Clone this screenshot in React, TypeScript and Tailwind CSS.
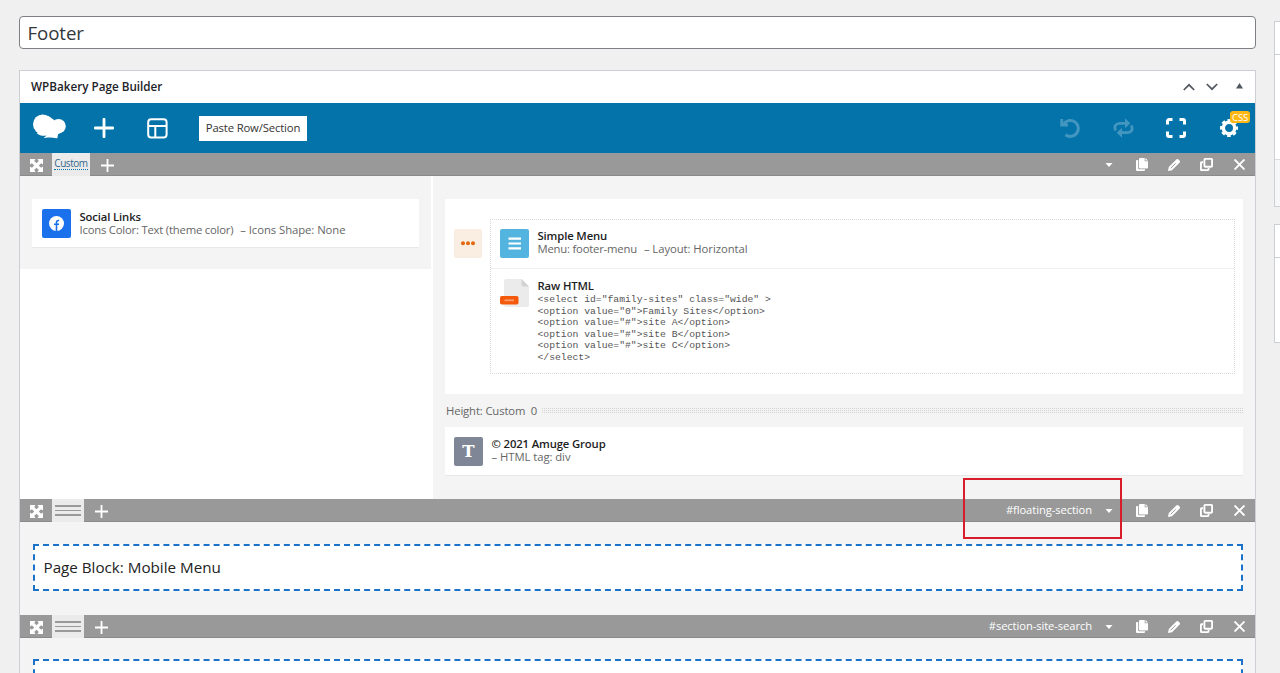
import React from 'react'

type RowBarProps = {
  tab?: string
  anchor?: string
}

const Plus: React.FC<{ size: number; stroke: number }> = ({ size, stroke }) => (
  <svg width={size} height={size} viewBox={`0 0 ${size} ${size}`} stroke="#fff" strokeWidth={stroke}>
    <path d={`M${size / 2} 0V${size}M0 ${size / 2}H${size}`} />
  </svg>
)

const RowBar: React.FC<RowBarProps> = ({ tab, anchor }) => (
  <div className="flex h-[23px] shrink-0 border-b border-[#8a8a8a] bg-[#999999] text-white">
    <div className="flex w-[32px] items-center justify-center pt-[2px]">
      <svg width="13" height="13" viewBox="0 0 13 13" fill="#fff">
        <path d="M0 0h5.6L4.2 1.9 6.5 4.2 8.8 1.9 7.4 0H13v5.6l-1.9-1.4L8.8 6.5l2.3 2.3L13 7.4V13H7.4l1.4-1.9L6.5 8.8l-2.3 2.3L5.6 13H0V7.4l1.9 1.4 2.3-2.3-2.3-2.3L0 5.6z" />
      </svg>
    </div>
    {tab ? (
      <div className="flex h-[23px] w-[38px] justify-center bg-[#ebebeb] pt-[4px]">
        <span className="h-[13px] border-b border-dotted border-[#0073aa] text-[10px] leading-[13px] tracking-[-0.45px] whitespace-nowrap text-[#32698a]">
          {tab}
        </span>
      </div>
    ) : (
      <div className="flex h-[23px] w-[32px] flex-col items-center justify-center gap-[3px] bg-[#ebebeb]">
        <span className="h-[1.5px] w-[26px] bg-[#999]" />
        <span className="h-[1.5px] w-[26px] bg-[#999]" />
        <span className="h-[1.5px] w-[26px] bg-[#999]" />
      </div>
    )}
    <div className="flex w-[34px] items-center justify-center pt-[2px]">
      <Plus size={13} stroke={1.8} />
    </div>
    <div className="ml-auto flex items-center pt-px">
      {anchor && <span className="-mt-px text-[11.2px] leading-none tracking-[-0.08px]">{anchor}</span>}
      <div className="flex w-[33.5px] justify-center pt-px">
        <svg width="8" height="4" viewBox="0 0 8 4" fill="#fff">
          <path d="M.5 0h7L4 4z" />
        </svg>
      </div>
      <div className="flex w-[32.5px] justify-center">
        <svg width="12" height="13" viewBox="0 0 12 13" fill="#fff">
          <path d="M4 0h4.7v3.3H12v6.2a1 1 0 0 1-1 1H4a1 1 0 0 1-1-1V1a1 1 0 0 1 1-1z" />
          <path d="M9.5 0 12 2.5H9.5z" />
          <path d="M2.2 2H1a1 1 0 0 0-1 1v9a1 1 0 0 0 1 1h7a1 1 0 0 0 1-1v-.7H3.2a1 1 0 0 1-1-1z" />
        </svg>
      </div>
      <div className="flex w-[32.5px] justify-center">
        <svg width="12" height="12" viewBox="0 0 12 12">
          <path fill="#fff" d="M0 12 .8 8 8.3.5a1.5 1.5 0 0 1 2.1 0l1.1 1.1a1.5 1.5 0 0 1 0 2.1L4 11.2z" />
          <path d="M2.6 9.3 7.6 4.3" stroke="#999" strokeWidth="1" />
        </svg>
      </div>
      <div className="flex w-[32.5px] justify-center">
        <svg width="13" height="13" viewBox="0 0 13 13" fill="none" stroke="#fff" strokeWidth="1.9">
          <rect x="4.4" y=".9" width="7.7" height="7.9" rx="1" />
          <path d="M3 4.2H1.9a1 1 0 0 0-1 1v5.9a1 1 0 0 0 1 1h5.7a1 1 0 0 0 1-1V10" />
        </svg>
      </div>
      <div className="flex w-[32px] justify-center">
        <svg width="11" height="11" viewBox="0 0 11 11" stroke="#fff" strokeWidth="1.9">
          <path d="M.5.5l10 10M10.5.5.5 10.5" />
        </svg>
      </div>
    </div>
  </div>
)

const Toolbar = () => (
  <div className="flex h-[50px] shrink-0 items-center bg-[#0473aa]">
    <svg className="-mt-[3px] ml-[13px]" width="33" height="25" viewBox="0 0 33 25" fill="#fff">
      <circle cx="9.8" cy="10.3" r="9.8" />
      <circle cx="25.5" cy="12.2" r="7.3" />
      <path d="M15.5 2 20.8 5.8 28 19c-2 .5-2.800.700-3 1.600l-.5 2.900c-.1.700-.5.900-1.200.8-3.800-.8-7-.9-11.600-.3-.8.100-.9-.5-.3-.8l2.400-1.700c-3.300.7-7 .4-9.800-2L9 8z" />
    </svg>
    <div className="ml-[28px]">
      <svg width="20" height="20" viewBox="0 0 20 20" stroke="#fff" strokeWidth="2.8" strokeLinecap="round">
        <path d="M10 1.2v17.6M1.2 10h17.6" />
      </svg>
    </div>
    <svg className="ml-[33px]" width="21" height="21" viewBox="0 0 21 21" fill="none" stroke="#fff" strokeWidth="2">
      <rect x="1.2" y="1.2" width="18.4" height="18.4" rx="3" />
      <path d="M1.2 7.9h18.4M8.3 7.9v11.7" />
    </svg>
    <button className="ml-[31px] h-[25px] w-[108px] bg-white text-[11.3px] leading-none tracking-[-0.15px] whitespace-nowrap text-[#333]">
      Paste Row/Section
    </button>
    <div className="ml-auto flex items-center">
      <svg width="21" height="21" viewBox="0 0 21 21" fill="none" stroke="#4396c0" strokeWidth="3">
        <path d="M4 5.5A8 8 0 1 1 5.5 16.8" />
        <path d="M.3 1v7.4h7.6V5.5L3.2 4.8V1z" fill="#4396c0" stroke="none" />
      </svg>
      <svg className="ml-[32px]" width="21" height="20" viewBox="0 0 21 20" fill="none" stroke="#4396c0" strokeWidth="2.8">
        <path d="M2.7 12.5C.5 8.3 3 5.3 7 5.3h6.3M18.3 7.5c2.2 4.2-.3 7.2-4.3 7.2H7.7" />
        <path d="M12 .3 17.3 5.3 12 10.3zM9 9.7 3.7 14.7 9 19.7z" fill="#4396c0" stroke="none" />
      </svg>
      <svg className="ml-[32px]" width="20" height="20" viewBox="0 0 20 20" fill="none" stroke="#fff" strokeWidth="3">
        <path d="M1.5 6.5V3a1.5 1.5 0 0 1 1.5-1.5h3.5M13.5 1.5H17A1.5 1.5 0 0 1 18.5 3v3.5M18.5 13.5V17a1.5 1.5 0 0 1-1.5 1.5h-3.5M6.500 18.5H3A1.500 1.5 0 0 1 1.5 17v-3.5" />
      </svg>
      <div className="relative mr-[17px] ml-[34px]">
        <svg width="18" height="18" viewBox="0 0 18 18" fill="none" stroke="#fff">
          <circle cx="9" cy="9" r="5.700" strokeWidth="3.4" />
          <circle cx="9" cy="9" r="7.9" strokeWidth="2.2" strokeDasharray="3.6 2.605" strokeDashoffset="1.8" />
        </svg>
        <span className="absolute top-[-8px] left-[10px] h-[12px] w-[20px] rounded-[3px] bg-[#fdb813] text-center text-[9.5px] leading-[13px] tracking-[-0.2px] text-white">
          CSS
        </span>
      </div>
    </div>
  </div>
)

type ElementTextProps = {
  title: string
  first?: string
  second?: string
  children?: React.ReactNode
}

const ElementText: React.FC<ElementTextProps> = ({ title, first, second, children }) => (
  <div className="ml-[8.5px] whitespace-nowrap">
    <h4 className="text-[11.3px] leading-[13px] font-semibold tracking-[-0.13px] text-[#1d1d1d]">{title}</h4>
    {(first || second) && (
      <p className="flex gap-[7px] text-[11.3px] leading-[13px] text-[#666]">
        {first && <span className="tracking-[-0.21px]">{first}</span>}
        {second && <span className="tracking-[-0.06px]">{second}</span>}
      </p>
    )}
    {children}
  </div>
)

const code = `<select id="family-sites" class="wide" >
<option value="0">Family Sites</option>
<option value="#">site A</option>
<option value="#">site B</option>
<option value="#">site C</option>
</select>`

export default function App() {
  return (
    <div className="flex h-[673px] w-[1280px] overflow-hidden bg-[#f0f0f0] font-['Open_Sans',sans-serif] text-[#1d2327]">
      <main className="ml-[19px] w-[1237px] shrink-0 pt-[16px]">
        <div className="flex h-[33px] items-center rounded-[4px] border border-[#7d8185] bg-white pl-[7.5px] text-[18.7px] leading-none tracking-[-0.1px] text-[#32373c]">
          <span className="pt-[2px]">Footer</span>
        </div>

        <section className="mt-[21px] flex flex-col border border-[#ccd0d4] bg-white">
          <header className="flex h-[32px] shrink-0 items-center pl-[11px]">
            <h2 className="text-[11.7px] leading-none font-semibold">WPBakery Page Builder</h2>
            <div className="ml-auto flex items-center pr-[12px]">
              <svg width="12" height="8" viewBox="0 0 12 8" fill="none" stroke="#50575e" strokeWidth="1.7">
                <path d="m.8 7 5.2-5.2L11.2 7" />
              </svg>
              <svg className="ml-[11px]" width="12" height="8" viewBox="0 0 12 8" fill="none" stroke="#50575e" strokeWidth="1.7">
                <path d="m.8 1 5.2 5.2L11.2 1" />
              </svg>
              <svg className="-mt-[2px] ml-[18px]" width="7" height="6" viewBox="0 0 7 6" fill="#50575e">
                <path d="M3.5 0 7 5.5H0z" />
              </svg>
            </div>
          </header>

          <Toolbar />
          <RowBar tab="Custom" />

          <div className="flex h-[323px] shrink-0 gap-[2px]">
            <div className="h-[93px] w-[411px] shrink-0 bg-[#f4f4f4] px-[12px] pt-[23px]">
              <div className="flex h-[48px] w-[387px] items-center bg-white pl-[10px] shadow-[0_1px_0_#e8e8e8]">
                <svg width="29" height="29" viewBox="0 0 29 29">
                  <rect width="29" height="29" rx="2" fill="#1b70ec" />
                  <circle cx="14.5" cy="14.5" r="7.5" fill="#fff" />
                  <path d="M14.5 22v-8.3c0-1.6.8-2.3 2.6-2.2M12 15.2h5" fill="none" stroke="#1b70ec" strokeWidth="1.6" />
                </svg>
                <ElementText
                  title="Social Links"
                  first="Icons Color: Text (theme color)"
                  second="– Icons Shape: None"
                />
              </div>
            </div>

            <div className="grow bg-[#f4f4f4] px-[12px] pt-[23px]">
              <div className="flex h-[195px] bg-white pt-[20px] pr-[8px] pl-[9px]">
                <svg className="mt-[10px]" width="28" height="29" viewBox="0 0 28 29">
                  <rect width="28" height="29" rx="2" fill="#faeee2" />
                  <g fill="#e2680f">
                    <circle cx="9" cy="14.3" r="2" />
                    <circle cx="14" cy="14.3" r="2" />
                    <circle cx="19" cy="14.3" r="2" />
                  </g>
                </svg>
                <div className="ml-[8px] h-[155px] grow border border-dotted border-[#d8d8d8]">
                  <div className="flex h-[49px] border-b border-[#f0f0f0] pt-[9.4px] pl-[9px]">
                    <svg width="29" height="29" viewBox="0 0 29 29">
                      <rect width="29" height="29" rx="2" fill="#53b4df" />
                      <path d="M8.5 9.7h12.5M8.5 14.5h12.5M8.5 19.3h12.5" stroke="#fff" strokeWidth="2.2" />
                    </svg>
                    <ElementText title="Simple Menu" first="Menu: footer-menu" second="– Layout: Horizontal" />
                  </div>
                  <div className="flex pt-[10px] pl-[9px]">
                    <svg width="29" height="29" viewBox="0 0 29 29">
                      <path d="M6 0h15.5L29 7.5V26a2 2 0 0 1-2 2H6a2 2 0 0 1-2-2V2a2 2 0 0 1 2-2z" fill="#ebebeb" />
                      <path d="M21.5 0 29 7.5h-5.5a2 2 0 0 1-2-2z" fill="#d2d2d2" />
                      <rect y="17" width="18.5" height="8.5" rx="1.8" fill="#f4590b" />
                      <path d="M4.5 21.3h9.5" stroke="#f99b6b" strokeWidth="1.8" />
                    </svg>
                    <ElementText title="Raw HTML">
                      <pre className="mt-[2px] font-['Liberation_Mono',monospace] text-[9.72px] leading-[11.5px] text-[#555]">
                        {code}
                      </pre>
                    </ElementText>
                  </div>
                </div>
              </div>

              <div className="flex h-[33px] items-center pl-px">
                <span className="pt-px text-[11.3px] leading-none tracking-[-0.14px] whitespace-nowrap text-[#666]">
                  Height: Custom&nbsp; 0
                </span>
                <span className="ml-[4px] h-[6px] grow bg-[conic-gradient(#d2d2d2_25%,transparent_0)] bg-[size:2px_2px]" />
              </div>

              <div className="flex h-[48px] bg-white pt-[10px] pl-[9px] shadow-[0_1px_0_#e8e8e8]">
                <svg width="29" height="29" viewBox="0 0 29 29">
                  <rect width="29" height="29" rx="2" fill="#7f8796" />
                  <text x="14.5" y="19.7" textAnchor="middle" fill="#fff" fontFamily="DejaVu Serif" fontWeight="bold" fontSize="16.5">
                    T
                  </text>
                </svg>
                <ElementText title="© 2021 Amuge Group" second="– HTML tag: div" />
              </div>
            </div>
          </div>

          <div className="relative">
            <RowBar anchor="#floating-section" />
            <div className="absolute top-[-21px] left-[943px] h-[61px] w-[159px] border-[2px] border-[#d91c2a]" />
          </div>
          <div className="h-[93px] bg-[#f4f4f4] pt-[22px] pr-[12px] pl-[13px]">
            <div className="flex h-[47px] items-center border-2 border-dashed border-[#1b73c9] bg-white pl-[8.5px] text-[15.2px] leading-none text-[#222]">
              Page Block: Mobile Menu
            </div>
          </div>

          <RowBar anchor="#section-site-search" />
          <div className="h-[93px] bg-[#f4f4f4] pt-[21px] pr-[12px] pl-[13px]">
            <div className="h-[47px] border-2 border-dashed border-[#1b73c9] bg-white" />
          </div>
        </section>
      </main>

      <aside className="ml-[18px] w-[240px] shrink-0 pt-[21px]">
        <div className="h-[186px] border border-[#ccd0d4] bg-white">
          <div className="h-[33px] border-b border-[#ccd0d4]" />
          <div className="h-[105px] border-b border-[#dcdcde]" />
          <div className="h-[46px] bg-[#f6f7f7]" />
        </div>
        <div className="mt-[17px] h-[119px] border border-[#ccd0d4] bg-white">
          <div className="h-[33px] border-b border-[#ccd0d4]" />
        </div>
      </aside>
    </div>
  )
}
